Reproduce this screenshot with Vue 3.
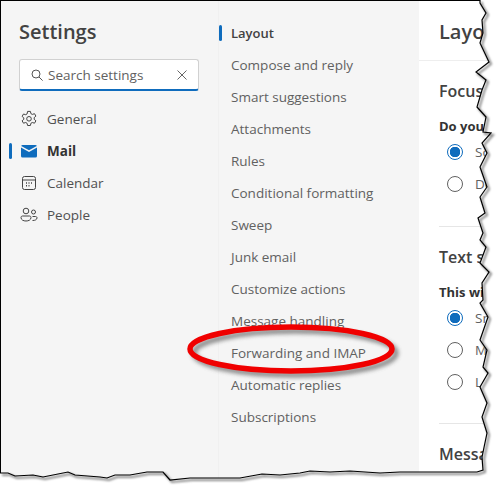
<script setup>
const navItems = ['General', 'Mail', 'Calendar', 'People']
const listItems = ['Layout', 'Compose and reply', 'Smart suggestions', 'Attachments', 'Rules', 'Conditional formatting', 'Sweep', 'Junk email', 'Customize actions', 'Message handling', 'Forwarding and IMAP', 'Automatic replies', 'Subscriptions']
const tear = '480,0 480,3 486,13 482,20 483,33 480,43 489,62 476,72 486,80 482,90 477,107 486,117 483,132 491,133 482,143 487,153 480,167 487,187 480,197 485,213 478,218 483,233 480,240 486,247 480,263 489,272 482,283 483,300 480,303 488,317 480,340 487,350 483,367 488,373 480,387 487,403 482,417 487,433 482,457 483,470 477,472 440,472 415,472 400,472 380,473 350,471 330,472 310,471 300,473 280,475 262,474 240,478 190,478 170,480 163,472 147,472 130,475 115,475 107,478 100,477 75,475 68,472 43,477 33,475 15,476 8,473 0,473 0,490 498,490 498,0'
</script>

<template>
  <div class="page">
    <aside class="sidebar">
      <h1 class="title">Settings</h1>
      <div class="search">
        <svg width="14" height="14" viewBox="0 0 14 14" fill="none" stroke="#555" stroke-width="1"><circle cx="6" cy="6" r="4"/><path d="M9 9l3.6 3.6"/></svg>
        <span class="search-text">Search settings</span>
        <svg width="12" height="12" viewBox="0 0 12 12" fill="none" stroke="#666" stroke-width="1"><path d="M1.5 1.5l9 9M10.5 1.5l-9 9"/></svg>
      </div>
      <nav class="nav">
        <div v-for="item in navItems" :key="item" class="nav-item" :class="{ active: item === 'Mail' }">
          <svg v-if="item === 'General'" width="18" height="18" viewBox="0 0 18 18" fill="none" stroke="#444" stroke-width="1"><path d="M7.6 1.4h2.8l.5 2.2 1.4.8 2.2-.7 1.4 2.4-1.7 1.5v1.7l1.7 1.5-1.4 2.4-2.2-.7-1.4.8-.5 2.2H7.6l-.5-2.2-1.4-.8-2.2.7-1.4-2.4 1.7-1.5V7.9L2.1 6.4l1.4-2.4 2.2.7 1.4-.8z"/><circle cx="9" cy="8.8" r="2.3"/></svg>
          <svg v-else-if="item === 'Mail'" width="18" height="18" viewBox="0 0 18 18"><path d="M1 5.5 9 10l8-4.500V14a1.500 1.500 0 0 1-1.500 1.500h-13A1.500 1.500 0 0 1 1 14z" fill="#0f6cbd"/><path d="M1.200 4A1.500 1.500 0 0 1 2.500 3h13a1.500 1.500 0 0 1 1.300 1L9 8.300z" fill="#0f6cbd"/></svg>
          <svg v-else-if="item === 'Calendar'" width="18" height="18" viewBox="0 0 18 18" fill="none" stroke="#444" stroke-width="1"><rect x="2.500" y="2.500" width="13" height="13" rx="2"/><path d="M2.500 6h13"/><path d="M6 9h1M8.500 9h1M11 9h1M6 11.700h1M8.500 11.700h1" stroke-width="1.500"/></svg>
          <svg v-else width="18" height="18" viewBox="0 0 18 18" fill="none" stroke="#444" stroke-width="1"><circle cx="6" cy="5" r="2.800"/><circle cx="13.500" cy="6" r="2"/><path d="M1 11.500c0-1 .8-1.500 1.500-1.500h7c.8 0 1.500.6 1.500 1.500 0 2.500-2.500 3.500-5 3.500s-5-1-5-3.500z"/><path d="M12.500 10.500h3c.8 0 1.500.5 1.500 1.300 0 1.800-1.700 2.700-4.500 2.700"/></svg>
          <span>{{ item }}</span>
        </div>
      </nav>
    </aside>

    <section class="list">
      <div v-for="item in listItems" :key="item" class="list-item" :class="{ active: item === 'Layout' }">{{ item }}</div>
    </section>

    <main class="content">
      <h2 class="content-title">Layout</h2>
      <div class="group">
        <h3>Focused Inbox</h3>
        <p class="question">Do you want</p>
        <div class="radio-row"><span class="radio on"></span><span class="radio-label">Sort messages</span></div>
        <div class="radio-row"><span class="radio"></span><span class="radio-label">Don't sort</span></div>
      </div>
      <div class="group">
        <h3>Text size</h3>
        <p class="question">This will</p>
        <div class="radio-row"><span class="radio on"></span><span class="radio-label">Small</span></div>
        <div class="radio-row"><span class="radio"></span><span class="radio-label">Medium</span></div>
        <div class="radio-row"><span class="radio"></span><span class="radio-label">Large</span></div>
      </div>
      <div class="group last">
        <h3>Message</h3>
      </div>
    </main>

    <svg class="overlay" width="498" height="490" viewBox="0 0 498 490">
      <defs>
        <filter id="blur" x="-10%" y="-40%" width="120%" height="180%"><feGaussianBlur stdDeviation="2"/></filter>
        <filter id="tearBlur"><feGaussianBlur stdDeviation="1"/></filter>
      </defs>
      <polygon :points="tear" fill="#fff"/>
      <polyline :points="tear.split(' ').slice(0, -3).join(' ')" transform="translate(2 2)" fill="none" stroke="#888" stroke-width="2" filter="url(#tearBlur)"/>
      <polyline :points="tear.split(' ').slice(0, -3).join(' ')" fill="none" stroke="#000" stroke-width="1.200"/>
      <ellipse cx="295" cy="353" rx="101" ry="22" fill="none" stroke="#555" stroke-width="5" opacity="0.7" filter="url(#blur)"/>
      <ellipse cx="291" cy="349" rx="101" ry="22" fill="none" stroke="#f00000" stroke-width="5.500"/>
      <path d="M0 .5H480M.5 0V473" stroke="#000" fill="none"/>
    </svg>
  </div>
</template>

<style scoped>
.page {
  position: relative;
  display: grid;
  grid-template-columns: 219px 200px 1fr;
  width: 498px;
  height: 490px;
  overflow: hidden;
  font-family: "Open Sans", "Noto Sans", sans-serif;
  color: #424242;
  background: #fff;
}
.sidebar {
  background: #f5f5f5;
  border-right: 1px solid #f0f0f0;
  padding: 18px 20px 0 19px;
}
.title {
  margin: 0;
  font-size: 20px;
  line-height: 28px;
  font-weight: 600;
  color: #424242;
}
.search {
  display: flex;
  align-items: center;
  gap: 4px;
  box-sizing: border-box;
  width: 180px;
  height: 32px;
  margin-top: 13px;
  padding: 0 10px;
  background: #fff;
  border: 1px solid #d1d1d1;
  border-bottom: 2px solid #0f6cbd;
  border-radius: 3px;
}
.search-text {
  flex: 1;
  font-size: 13.500px;
  color: #616161;
}
.nav {
  margin-top: 12px;
}
.nav-item {
  position: relative;
  display: flex;
  align-items: center;
  gap: 9px;
  height: 32px;
  margin-left: 1px;
  font-size: 13.500px;
  color: #505050;
}
.nav-item.active {
  font-weight: 700;
  color: #333;
}
.nav-item.active::before {
  content: "";
  position: absolute;
  left: -11px;
  top: 8px;
  width: 3px;
  height: 16px;
  border-radius: 2px;
  background: #0f6cbd;
}
.list {
  background: #f5f5f5;
  padding-top: 17px;
  padding-left: 12px;
}
.list-item {
  position: relative;
  height: 32px;
  line-height: 32px;
  font-size: 13.500px;
  color: #616161;
}
.list-item.active {
  font-weight: 600;
  font-size: 13px;
  color: #424242;
}
.list-item.active::before {
  content: "";
  position: absolute;
  left: -12px;
  top: 8px;
  width: 3px;
  height: 16px;
  border-radius: 2px;
  background: #0f6cbd;
}
.content {
  min-width: 0;
  overflow: hidden;
  white-space: nowrap;
}
.content-title {
  height: 42px;
  margin: 0;
  padding: 18px 0 0 20px;
  font-size: 20px;
  line-height: 28px;
  font-weight: 600;
  box-sizing: content-box;
  border-bottom: 1px solid #eee;
}
.group {
  margin-left: 20px;
  height: 165px;
  padding-top: 0;
  border-bottom: 1px solid #e6e6e6;
}
.group + .group {
  height: 196px;
}
.group h3 {
  margin: 0;
  padding-top: 19px;
  font-size: 16px;
  line-height: 22px;
  font-weight: 600;
}
.group.last {
  border: none;
}
.question {
  margin: 14px 0 0;
  font-size: 13px;
  line-height: 20px;
  font-weight: 700;
  color: #333;
}
.radio-row {
  display: flex;
  align-items: center;
  gap: 12px;
  height: 32px;
  margin-left: 8px;
  font-size: 13.500px;
  color: #616161;
}
.radio {
  flex: none;
  box-sizing: border-box;
  width: 16px;
  height: 16px;
  border: 1px solid #616161;
  border-radius: 50%;
  background: #fff;
}
.radio.on {
  border-color: #0f6cbd;
  background: radial-gradient(circle, #0f6cbd 0 5px, #fff 5.500px);
}
.overlay {
  position: absolute;
  left: 0;
  top: 0;
  pointer-events: none;
}
</style>
